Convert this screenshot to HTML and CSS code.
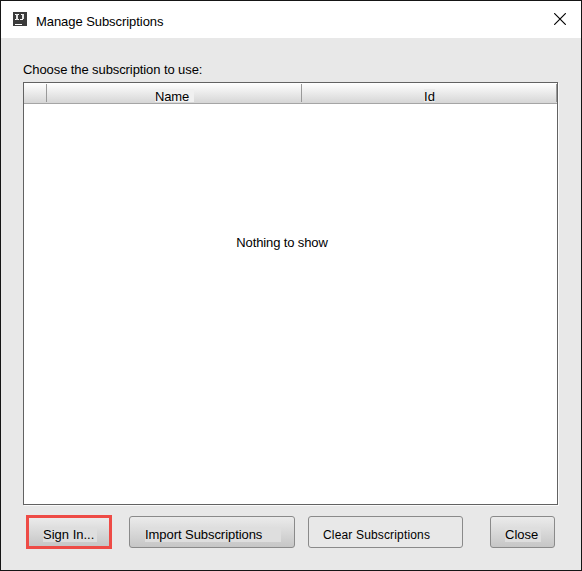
FILE: index.html
```html
<!DOCTYPE html>
<html lang="en">
<head>
<meta charset="utf-8">
<title>Manage Subscriptions</title>
<link rel="stylesheet" href="styles.css">
</head>
<body>
<div class="dialog">
  <header class="titlebar">
    <svg class="logo" width="14" height="14" viewBox="0 0 14 14" shape-rendering="crispEdges">
      <path fill="#3b3b3b" d="M0 0h14v14H0z"/>
      <path fill="none" stroke="#fff" stroke-width="1" d="M2 2.5h4M2 7.5h4M8 2.5h3M7 7.5h3M2 12.5h7"/>
      <path fill="none" stroke="#e4e4e4" stroke-width="2" d="M4 2v6M10 2v5"/>
    </svg>
    <h1 class="title">Manage Subscriptions</h1>
    <svg class="close" width="12" height="12" viewBox="0 0 12 12">
      <path fill="none" stroke="#000" stroke-width="1.15" d="M.2.2l11.6 11.6M11.8.2L.2 11.8"/>
    </svg>
  </header>
  <main class="content">
    <p class="prompt">Choose the subscription to use:</p>
    <section class="table">
      <div class="thead">
        <div class="th"></div>
        <div class="th"><span class="patch name">Name</span></div>
        <div class="th"><span class="patch id">Id</span></div>
      </div>
      <div class="empty">Nothing to show</div>
    </section>
    <footer class="actions">
      <button class="btn sign"><span class="patch t-sign">Sign In...</span></button>
      <button class="btn import"><span class="patch t-import">Import Subscriptions</span></button>
      <button class="btn clear"><span class="t-clear">Clear Subscriptions</span></button>
      <button class="btn dismiss"><span class="patch t-close">Close</span></button>
    </footer>
  </main>
</div>
</body>
</html>
```
FILE: styles.css
```css
* { box-sizing: border-box; }
body { margin: 0; font: 13px/15px "Liberation Sans", Arial, sans-serif; color: #000; }
.dialog {
  width: 582px; height: 571px;
  border: 1px solid #151515;
  background: #e8e8e8;
  display: flex; flex-direction: column;
}
.titlebar {
  height: 37px; background: #fff;
  display: flex; align-items: flex-start;
  padding: 11px 15px 0 12px;
}
.title { margin: 2px 0 0 9px; font-size: 13px; font-weight: 400; line-height: 15px; flex: 1; letter-spacing: -.06px; }
.close { margin-top: 1px; }
.content { flex: 1; padding: 24px 22px 0; }
.prompt { margin: 0; height: 20px; line-height: 16px; letter-spacing: -.09px; }
.table {
  width: 535px; height: 423px;
  border: 1px solid #626262;
  box-shadow: 1px 1px 0 #fafafa;
  background: #fff;
  display: flex; flex-direction: column;
}
.thead {
  height: 21px; flex: none;
  display: grid; grid-template-columns: 23px 255px 1fr;
  border-bottom: 1px solid #a5a5a5;
  background: linear-gradient(#fff, #d6d6d6);
}
.th { display: flex; justify-content: center; position: relative; padding-top: 6px; }
.th::after {
  content: ""; position: absolute; right: 0; top: 1px; bottom: 1px;
  width: 1px; background: #999;
}
.patch { background: #ebebeb; white-space: nowrap; display: block; text-align: left; }
.name { width: 39px; height: 13px; background: #f0f0f0; letter-spacing: -.15px; }
.id { height: 13px; letter-spacing: .1px; }
.empty { flex: 1; text-align: center; padding-top: 131px; padding-right: 17px; letter-spacing: -.12px; }
.actions { display: flex; padding: 10px 0 0 3px; align-items: flex-start; }
.btn {
  height: 32px; border: 1px solid #8a8a8a; border-radius: 3px;
  background: linear-gradient(#ebebeb, #c6c6c6);
  font: inherit; color: #000; text-align: left; white-space: nowrap;
  margin: 1px 0 0; padding: 0 0 0 15px;
}
.btn .patch { background: #dedede; height: 15px; }
.btn span { display: block; position: relative; top: 2px; }
.sign { width: 86px; height: 34px; margin-top: 0; border: 3px solid #ee4b46; border-radius: 0; padding-left: 14px; }
.import { width: 166px; margin-left: 17px; }
.clear { width: 155px; margin-left: 13px; background: #e8e8e8; padding-left: 14px; }
.dismiss { width: 65px; margin-left: 27px; padding-left: 14px; }
.t-sign { width: 54px; }
.t-import { width: 136px; letter-spacing: -.06px; }
.t-close { width: 36px; }
.btn .t-clear { top: 3px; font-size: 12px; letter-spacing: .16px; }
```
